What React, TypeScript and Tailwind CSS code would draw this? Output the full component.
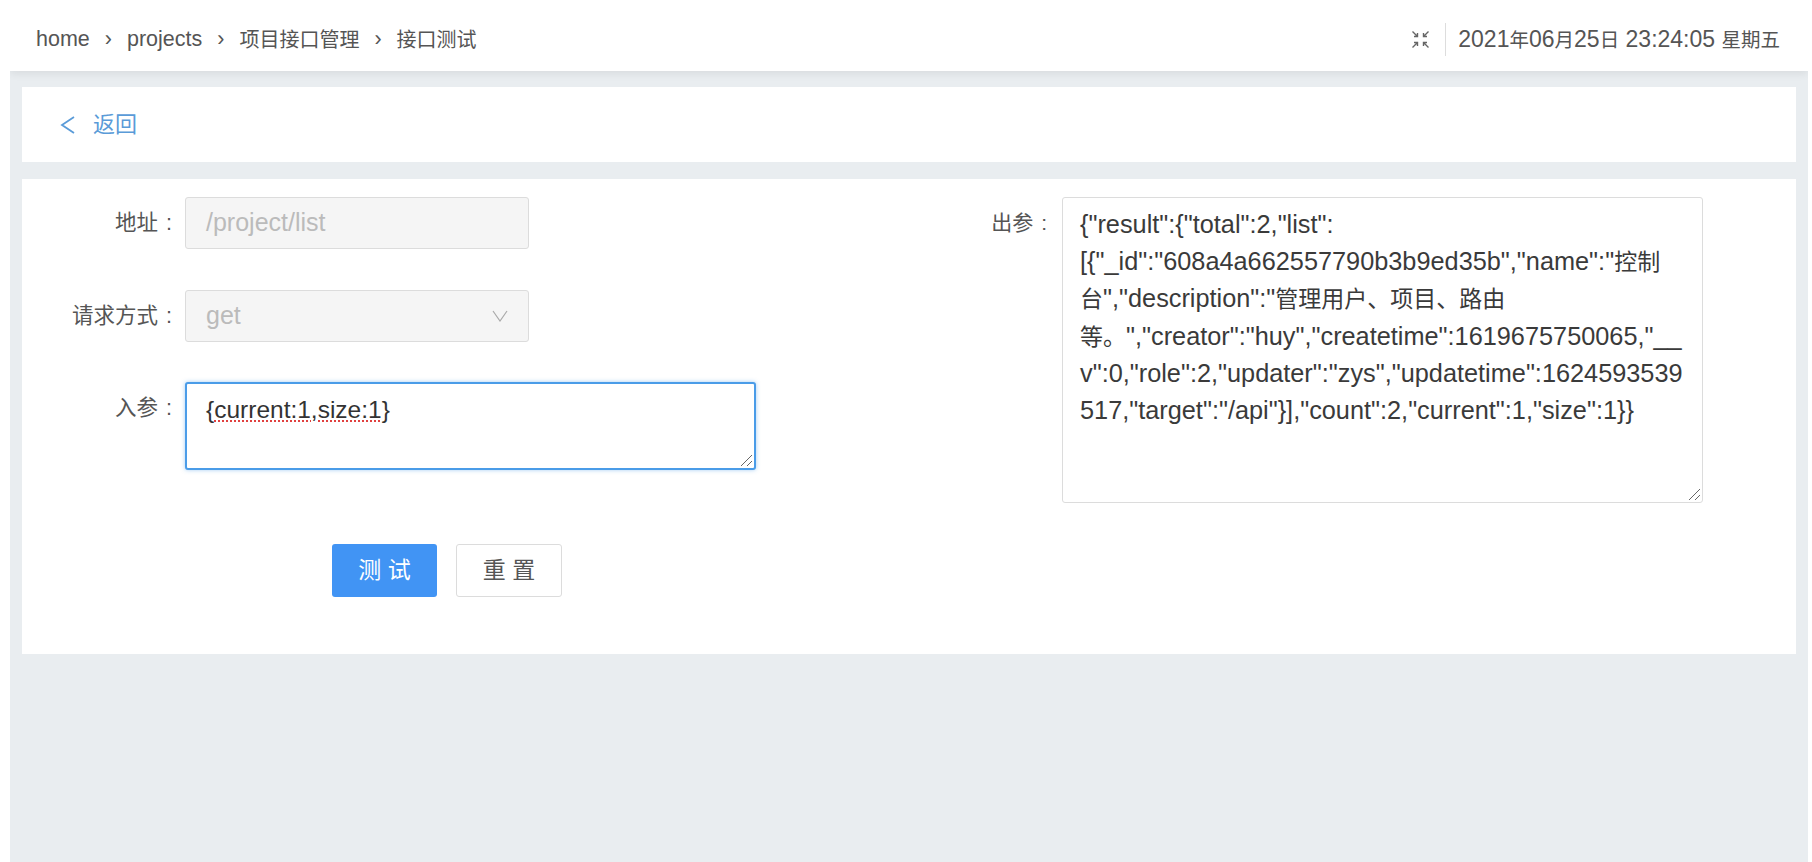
const crumbs = ['home', 'projects', '项目接口管理', '接口测试'];

const output = [
  '{"result":{"total":2,"list":',
  '[{"_id":"608a4a662557790b3b9ed35b","name":"控制',
  '台","description":"管理用户、项目、路由',
  '等。","creator":"huy","createtime":1619675750065,"__',
  'v":0,"role":2,"updater":"zys","updatetime":1624593539',
  '517,"target":"/api"}],"count":2,"current":1,"size":1}}',
];

// the Chinese runs sit a little smaller than the latin text next to them
const Mixed = ({ text, cjk }: { text: string; cjk: string }) => (
  <>
    {text.split(/([\u4e00-\u9fff、。]+)/).map((part, i) =>
      i % 2 ? <span key={i} className={cjk}>{part}</span> : part,
    )}
  </>
);

const ResizeHandle = () => (
  <svg className="absolute right-[1px] bottom-[1px]" width="14" height="14" viewBox="0 0 14 14" fill="none" stroke="#666" strokeWidth="1">
    <path d="M2 13 13 2" />
    <path d="M8 13 13 8" />
  </svg>
);

const FullscreenIcon = () => (
  <svg width="19" height="19" viewBox="0 0 19 19" fill="none" stroke="#666" strokeWidth="1.4">
    <path d="M1.5 1.5 6 6M6.5 3V6.5H3" />
    <path d="M17.5 1.5 13 6M12.5 3V6.5H16" />
    <path d="M1.5 17.5 6 13M6.5 16V12.5H3" />
    <path d="M17.5 17.5 13 13M12.5 16V12.5H16" />
  </svg>
);

const Field = ({ label, className, children }: { label: string; className: string; children: React.ReactNode }) => (
  <div className={`flex items-start ${className}`}>
    <label className="flex w-[163px] justify-end gap-[8px] pr-[13px] text-[21.5px] leading-[52px] text-[#555]">
      {label}
      <span>:</span>
    </label>
    {children}
  </div>
);

export default function App() {
  return (
    <div className="h-[862px] w-full bg-white pt-[8px] pl-[10px] pr-[4px] font-['Liberation_Sans','Noto_Sans_CJK_SC',sans-serif]">
      <div className="flex h-full flex-col overflow-hidden">
        <header className="relative z-10 flex h-[63px] shrink-0 items-center justify-between bg-white pl-[26px] pr-[28px] text-[#555] shadow-[0_3px_8px_rgba(0,0,0,0.07)]">
          <nav className="flex items-center text-[21.5px]">
            {crumbs.map((c, i) => (
              <span key={c} className="flex items-center">
                {i > 0 && <span className="mx-[15px]">›</span>}
                <Mixed text={c} cjk="text-[20px]" />
              </span>
            ))}
          </nav>
          <div className="flex items-center text-[23px]">
            <FullscreenIcon />
            <div className="ml-[15px] mr-[12px] h-[33px] w-px bg-[#ddd]" />
            <span>
              <Mixed text="2021年06月25日 23:24:05 星期五" cjk="text-[19.5px]" />
            </span>
          </div>
        </header>

        <main className="flex flex-1 flex-col gap-[17px] bg-[#e9edf0] px-[12px] pt-[16px]">
          <div className="flex h-[75px] items-center bg-white pl-[38px] text-[22px] text-[#5a9bd8]">
            <svg width="15" height="18" viewBox="0 0 15 18" fill="none" stroke="currentColor" strokeWidth="1.8" className="mr-[18px]">
              <path d="M14 1 2 9 14 17" />
            </svg>
            返回
          </div>

          <div className="flex h-[475px] bg-white pt-[18px]">
            <div className="w-[960px] shrink-0">
              <Field label="地址" className="mb-[41px]">
                <div className="flex h-[52px] w-[344px] items-center rounded-[3px] border border-[#dcdcdc] bg-[#f5f5f5] px-[20px] text-[25px] text-[#bbb]">
                  /project/list
                </div>
              </Field>
              <Field label="请求方式" className="mb-[40px]">
                <div className="flex h-[52px] w-[344px] items-center justify-between rounded-[3px] border border-[#dcdcdc] bg-[#f5f5f5] pl-[20px] pr-[20px] text-[25px] text-[#bbb]">
                  get
                  <svg width="16" height="12" viewBox="0 0 16 12" fill="none" stroke="#aaa" strokeWidth="1.2">
                    <path d="M1 1 8 11 15 1" />
                  </svg>
                </div>
              </Field>
              <Field label="入参" className="">
                <div className="relative h-[88px] w-[571px] rounded-[3px] border-2 border-[#4a9ce8] bg-white pl-[19px] pr-[20px] pt-[11px] text-[24.5px] leading-[30px] text-[#333] shadow-[0_0_4px_rgba(74,156,232,0.5)]">
                  {'{'}
                  <span className="underline decoration-dotted decoration-[#e0403f] decoration-2 underline-offset-2">current:1,size:1</span>
                  {'}'}
                  <ResizeHandle />
                </div>
              </Field>
              <div className="mt-[74px] flex gap-[19px] pl-[310px]">
                <button className="h-[53px] w-[105px] rounded-[3px] bg-[#4194f4] text-[23px] text-white">测 试</button>
                <button className="h-[53px] w-[106px] rounded-[3px] border border-[#dcdcdc] bg-white text-[23px] text-[#555]">重 置</button>
              </div>
            </div>

            <div className="flex items-start">
              <label className="flex w-[80px] justify-end gap-[8px] pr-[15px] text-[21px] leading-[52px] text-[#555]">
                出参
                <span>:</span>
              </label>
              <div className="relative h-[306px] w-[641px] rounded-[3px] border border-[#dcdcdc] bg-white px-[17px] py-[8px] text-[25.3px] leading-[36.6px] text-[#3a3a3a]">
                {output.map((line) => (
                  <div key={line} className="whitespace-nowrap">
                    <Mixed text={line} cjk="text-[23px]" />
                  </div>
                ))}
                <ResizeHandle />
              </div>
            </div>
          </div>
        </main>
      </div>
    </div>
  );
}
